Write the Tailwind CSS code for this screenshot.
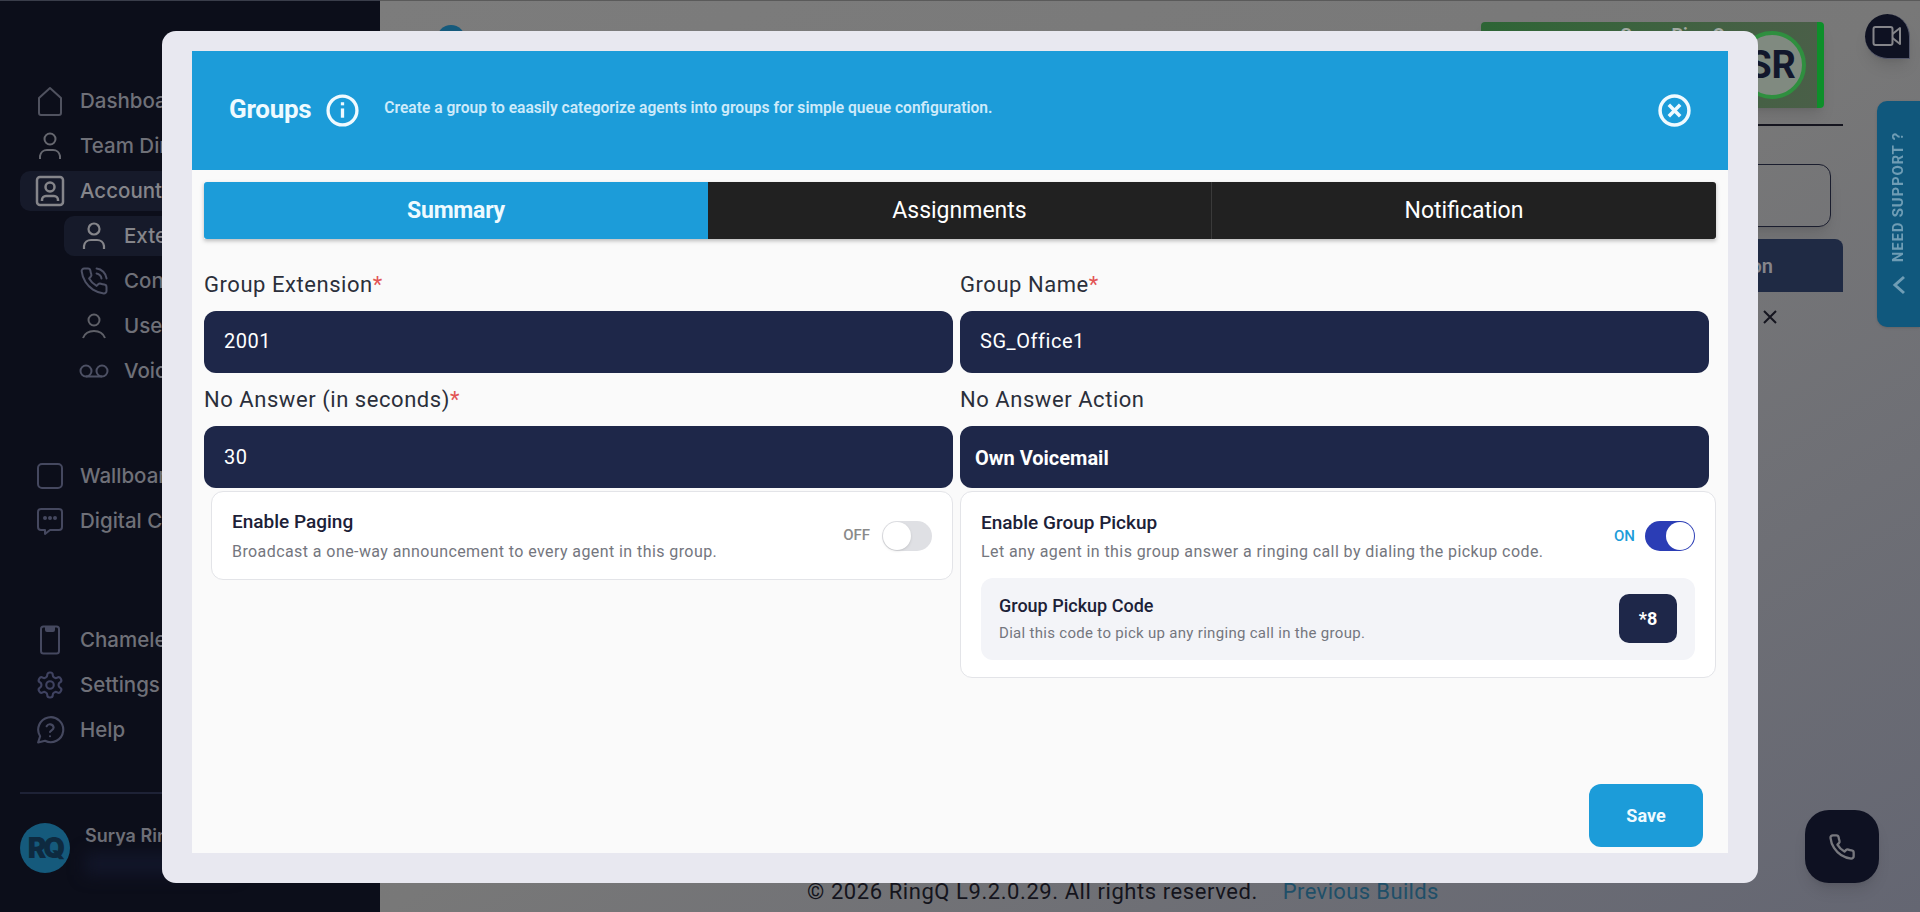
<!DOCTYPE html>
<html lang="en">
<head>
    <meta charset="UTF-8">
    <meta name="viewport" content="width=device-width, initial-scale=1.0">
    <title>RingQ Groups</title>
    <script src="https://cdn.jsdelivr.net/npm/@tailwindcss/browser@4"></script>
</head>
<body class="h-[912px] overflow-hidden font-['Roboto',sans-serif]">
    <div class="relative flex h-[912px] w-[1920px] overflow-hidden">

        <!-- Sidebar -->
        <aside class="flex h-full w-[380px] shrink-0 flex-col border-t border-[#3a3d4a] bg-[#0c0e1a] px-[20px] pt-[77.5px] font-['Inter',sans-serif] text-[20.5px] font-medium whitespace-nowrap text-[#6f7078]">
            <div class="flex h-[45px] items-center pl-[15px]">
                <svg class="mr-[15px] h-[32px] w-[30px] shrink-0" viewBox="0 0 30 32" fill="none" stroke="#50525f" stroke-width="2"><path d="M4 13 15 3l11 10v15a2 2 0 0 1-2 2H6a2 2 0 0 1-2-2z" stroke-linejoin="round"/></svg>
                Dashboard
            </div>
            <div class="flex h-[45px] items-center pl-[15px]">
                <svg class="mr-[15px] h-[28px] w-[30px] shrink-0" viewBox="0 0 30 28" fill="none" stroke="#66676f" stroke-width="2"><circle cx="15" cy="7" r="5.5"/><path d="M5 27v-3a7 7 0 0 1 7-6h6a7 7 0 0 1 7 6v3"/></svg>
                Team Directory
            </div>
            <div class="flex h-[45px] items-center">
                <div class="flex h-[40px] w-full items-center rounded-[10px] bg-[#161a2a] pl-[15px] text-[#85858a]">
                    <svg class="mr-[15px] h-[32px] w-[30px] shrink-0" viewBox="0 0 30 32" fill="none" stroke="#85858a" stroke-width="2.5"><rect x="2" y="2" width="26" height="28" rx="3"/><circle cx="15" cy="12" r="4.5"/><path d="M7 26v-1a4 4 0 0 1 4-4h8a4 4 0 0 1 4 4v1"/></svg>
                    Accounts
                </div>
            </div>
            <div class="flex h-[45px] items-center pl-[44px]">
                <div class="flex h-[40px] w-full items-center rounded-[10px] bg-[#161a2a] pl-[15px] text-[#85858a]">
                    <svg class="mr-[15px] h-[28px] w-[30px] shrink-0" viewBox="0 0 30 28" fill="none" stroke="#85858a" stroke-width="2.2"><circle cx="15" cy="7" r="5.5"/><path d="M5 27v-3a7 7 0 0 1 7-6h6a7 7 0 0 1 7 6v3"/></svg>
                    Extensions
                </div>
            </div>
            <div class="flex h-[45px] items-center pl-[59px]">
                <svg class="mr-[15px] h-[30px] w-[30px] shrink-0" viewBox="0 0 24 24" fill="none" stroke="#4d5064" stroke-width="1.6" stroke-linecap="round" stroke-linejoin="round"><path d="M14.05 2a9 9 0 0 1 8 7.94"/><path d="M14.05 6A5 5 0 0 1 18 10"/><path d="M22 16.92v3a2 2 0 0 1-2.18 2 19.79 19.79 0 0 1-8.63-3.07 19.5 19.5 0 0 1-6-6 19.79 19.79 0 0 1-3.07-8.67A2 2 0 0 1 4.11 2h3a2 2 0 0 1 2 1.72 12.84 12.84 0 0 0 .7 2.81 2 2 0 0 1-.45 2.11L8.09 9.91a16 16 0 0 0 6 6l1.27-1.27a2 2 0 0 1 2.11-.45 12.84 12.84 0 0 0 2.81.7A2 2 0 0 1 22 16.92z"/></svg>
                Contacts
            </div>
            <div class="flex h-[45px] items-center pl-[59px]">
                <svg class="mr-[15px] h-[26px] w-[30px] shrink-0" viewBox="0 0 30 26" fill="none" stroke="#5f6068" stroke-width="2"><circle cx="15" cy="7" r="5.5"/><path d="M4 25c2-5 6-7 11-7s9 2 11 7"/></svg>
                Users
            </div>
            <div class="flex h-[45px] items-center pl-[59px]">
                <svg class="mr-[15px] h-[18px] w-[30px] shrink-0" viewBox="0 0 30 18" fill="none" stroke="#4d5064" stroke-width="2"><circle cx="7" cy="9" r="5.5"/><circle cx="23" cy="9" r="5.5"/><path d="M7 14.5h16"/></svg>
                Voicemail
            </div>

            <div class="mt-[60px] flex h-[45px] items-center pl-[15px]">
                <svg class="mr-[15px] h-[28px] w-[30px] shrink-0" viewBox="0 0 30 28" fill="none" stroke="#45485f" stroke-width="2"><rect x="3" y="2" width="24" height="24" rx="4"/></svg>
                Wallboard
            </div>
            <div class="flex h-[45px] items-center pl-[15px]">
                <svg class="mr-[15px] h-[30px] w-[30px] shrink-0" viewBox="0 0 30 30" fill="none" stroke="#45485f" stroke-width="2"><path d="M6 3h18a3 3 0 0 1 3 3v15a3 3 0 0 1-3 3H15l-5 4v-4H6a3 3 0 0 1-3-3V6a3 3 0 0 1 3-3z" stroke-linejoin="round"/><circle cx="10" cy="12" r="1" fill="#45485f"/><circle cx="15" cy="12" r="1" fill="#45485f"/><circle cx="20" cy="12" r="1" fill="#45485f"/></svg>
                Digital Channels
            </div>

            <div class="mt-[74px] flex h-[45px] items-center pl-[15px]">
                <svg class="mr-[15px] h-[30px] w-[30px] shrink-0" viewBox="0 0 30 30" fill="none" stroke="#45485f" stroke-width="2"><rect x="6" y="1.5" width="18" height="27" rx="2.5"/><path d="M11 3h8v2a1 1 0 0 1-1 1h-6a1 1 0 0 1-1-1z" fill="#45485f"/></svg>
                Chameleon
            </div>
            <div class="flex h-[45px] items-center pl-[15px]">
                <svg class="mr-[15px] h-[30px] w-[30px] shrink-0" viewBox="0 0 24 24" fill="none" stroke="#3f4260" stroke-width="1.7" stroke-linecap="round" stroke-linejoin="round"><path d="M12.22 2h-.44a2 2 0 0 0-2 2v.18a2 2 0 0 1-1 1.73l-.43.25a2 2 0 0 1-2 0l-.15-.08a2 2 0 0 0-2.73.73l-.22.38a2 2 0 0 0 .73 2.73l.15.1a2 2 0 0 1 1 1.72v.51a2 2 0 0 1-1 1.74l-.15.09a2 2 0 0 0-.73 2.73l.22.38a2 2 0 0 0 2.73.73l.15-.08a2 2 0 0 1 2 0l.43.25a2 2 0 0 1 1 1.73V20a2 2 0 0 0 2 2h.44a2 2 0 0 0 2-2v-.18a2 2 0 0 1 1-1.73l.43-.25a2 2 0 0 1 2 0l.15.08a2 2 0 0 0 2.73-.73l.22-.39a2 2 0 0 0-.73-2.73l-.15-.08a2 2 0 0 1-1-1.74v-.5a2 2 0 0 1 1-1.74l.15-.09a2 2 0 0 0 .73-2.73l-.22-.38a2 2 0 0 0-2.73-.73l-.15.08a2 2 0 0 1-2 0l-.43-.25a2 2 0 0 1-1-1.73V4a2 2 0 0 0-2-2z"/><circle cx="12" cy="12" r="3"/></svg>
                Settings
            </div>
            <div class="flex h-[45px] items-center pl-[15px]">
                <svg class="mr-[15px] h-[30px] w-[30px] shrink-0" viewBox="0 0 24 24" fill="none" stroke="#45485f" stroke-width="1.7" stroke-linecap="round" stroke-linejoin="round"><path d="M2.5 22l1.6-5A10 10 0 1 1 8 20.6z"/><path d="M9.3 9a3 3 0 0 1 5.6 1c0 2-2.9 2.6-2.9 3.6"/><path d="M12 17h.01"/></svg>
                Help
            </div>

            <div class="mt-[39px] h-[2px] w-[300px] bg-[#1e2236]"></div>
            <div class="mt-[29px] flex items-start">
                <div class="flex h-[50px] w-[50px] shrink-0 items-center justify-center rounded-full bg-[#155a7c] text-[28px] font-black tracking-[-3px] text-[#0e2a40]">RQ</div>
                <div class="ml-[15px]">
                    <div class="mt-[-1px] text-[18px] font-semibold text-[#6f7078]">Surya RingQ</div>
                    <div class="mt-[4px] h-[22px] w-[150px] bg-[#12162a] blur-sm"></div>
                </div>
            </div>
        </aside>

        <!-- Dimmed page behind the dialog -->
        <main class="flex h-full min-w-0 flex-1 flex-col border-t border-[#5a5a5a] bg-linear-to-br from-[#7c7c7c] via-[#787878] to-[#646672]">
            <div class="flex items-start justify-between pt-[21px] pr-[96px]">
                <div class="mt-[3px] ml-[57px] h-[28px] w-[28px] rounded-full bg-[#155a7c]"></div>
                <div class="flex h-[86px] w-[343px] items-center justify-end rounded-[4px] border-r-[7px] border-[#0d8f2a] bg-linear-to-r from-[#2d6535] to-[#4a5f48] pr-[11px] shadow-lg">
                    <span class="mr-[13px] self-start text-[18px] leading-[26px] font-bold whitespace-nowrap text-[#a3aaa3]">Surya Ring Q</span>
                    <div class="flex h-[68px] w-[68px] items-center justify-center rounded-full border-[4px] border-[#2f8f3f] bg-[#808a80] text-[38px] font-bold text-[#12172c]">SR</div>
                </div>
            </div>
            <div class="mt-[16px] mr-[77px] ml-[700px] h-[2px] bg-[#15151f]"></div>
            <div class="mt-[38px] mr-[89px] ml-[700px] h-[63px] rounded-[12px] border border-[#1a1d2e] shadow-lg"></div>
            <div class="mt-[12px] mr-[77px] ml-[700px] flex h-[53px] items-center justify-end rounded-t-[8px] bg-[#1f2a44] pr-[70px] text-[20px] font-semibold text-[#85858a]">Add Extension</div>
            <div class="mt-[17px] mr-[142px] flex justify-end">
                <svg class="h-[16px] w-[16px]" viewBox="0 0 16 16" fill="none" stroke="#15151f" stroke-width="2"><path d="M2 2l12 12M14 2 2 14"/></svg>
            </div>
            <div class="mt-auto mb-[7px] ml-[427px] flex text-[22px] leading-[26px] tracking-[0.57px] whitespace-nowrap text-[#14141c]">
                <span>© 2026 RingQ L9.2.0.29. All rights reserved.</span>
                <span class="ml-[25px] tracking-[0.37px] text-[#1f4f68]">Previous Builds</span>
            </div>
        </main>

        <!-- Need support tab -->
        <div class="absolute top-[101px] right-0 flex h-[226px] w-[43px] flex-col items-center rounded-l-[10px] bg-[#10587d] pt-[31px] shadow">
            <span class="rotate-180 text-[15px] font-bold tracking-[0.8px] whitespace-nowrap text-[#6f9db5] [writing-mode:vertical-rl]">NEED SUPPORT ?</span>
            <svg class="mt-[13px] h-[20px] w-[14px]" viewBox="0 0 14 20" fill="none" stroke="#6f9db5" stroke-width="3"><path d="M12 2 3 10l9 8"/></svg>
        </div>

        <!-- Video bubble -->
        <div class="absolute top-[14px] left-[1865px] flex h-[45px] w-[45px] items-center justify-center rounded-t-full rounded-bl-full rounded-br-[2px] border-r border-b border-[#55586c] bg-[#0e1122] shadow-lg">
            <svg class="h-[22px] w-[30px]" viewBox="0 0 30 22" fill="none" stroke="#85858a" stroke-width="2" stroke-linejoin="round"><rect x="1.5" y="2" width="19" height="18" rx="2"/><path d="M20.5 9 28 3v16l-7.5-6"/></svg>
        </div>

        <!-- Dial button -->
        <div class="absolute top-[810px] left-[1805px] flex h-[73px] w-[74px] items-center justify-center rounded-[24px] bg-[#0e1122] shadow-lg">
            <svg class="h-[28px] w-[28px]" viewBox="0 0 24 24" fill="none" stroke="#77787e" stroke-width="2" stroke-linecap="round" stroke-linejoin="round"><path d="M22 16.92v3a2 2 0 0 1-2.18 2 19.79 19.79 0 0 1-8.63-3.07 19.5 19.5 0 0 1-6-6 19.79 19.79 0 0 1-3.07-8.67A2 2 0 0 1 4.11 2h3a2 2 0 0 1 2 1.72 12.84 12.84 0 0 0 .7 2.81 2 2 0 0 1-.45 2.11L8.09 9.91a16 16 0 0 0 6 6l1.27-1.27a2 2 0 0 1 2.11-.45 12.84 12.84 0 0 0 2.81.7A2 2 0 0 1 22 16.92z"/></svg>
        </div>

        <!-- Dialog -->
        <div class="absolute top-[31px] left-[162px] h-[852px] w-[1596px] rounded-[14px] bg-[#e8e8f0] px-[30px] pt-[20px] pb-[30px]">
            <div class="flex h-full flex-col bg-[#fafafa]">
                <div class="flex h-[119px] shrink-0 items-center justify-between bg-[#1c9cd9] pr-[37px] pl-[37px] text-white">
                    <div class="flex items-center">
                        <span class="mt-[-2px] text-[26px] font-bold tracking-[-0.3px] text-[#eefaff]">Groups</span>
                        <svg class="ml-[15px] h-[33px] w-[33px]" viewBox="0 0 32 32" fill="none" stroke="#f0faff" stroke-width="3.2"><circle cx="16" cy="16" r="14"/><path d="M16 14v9"/><path d="M16 8v3"/></svg>
                        <span class="mt-[-3px] ml-[25px] text-[15.6px] font-semibold text-[#cdeafa]">Create a group to eaasily categorize agents into groups for simple queue configuration.</span>
                    </div>
                    <svg class="h-[33px] w-[33px]" viewBox="0 0 32 32" fill="none" stroke="#f0faff" stroke-width="3.4"><circle cx="16" cy="16" r="14"/><path d="M10.5 10.5l11 11M21.5 10.5l-11 11"/></svg>
                </div>

                <div class="flex min-h-0 flex-1 flex-col px-[12px] pt-[12px]">
                    <!-- Tabs -->
                    <div class="grid h-[57px] shrink-0 grid-cols-3 text-[23px] shadow-[0_2px_4px_rgba(0,0,0,0.25)]">
                        <div class="flex items-center justify-center rounded-l-[3px] bg-[#1c9cd9] pt-[2px] font-bold tracking-[-0.2px] text-[#eefaff]">Summary</div>
                        <div class="flex items-center justify-center border-r border-[#3a3a3a] bg-[#212121] pt-[2px] text-white">Assignments</div>
                        <div class="flex items-center justify-center rounded-r-[3px] bg-[#212121] pt-[2px] text-white">Notification</div>
                    </div>

                    <!-- Fields -->
                    <div class="mt-[19px] grid shrink-0 grid-cols-2 text-[22px] tracking-[0.55px] text-[#2b2f3a]">
                        <div class="pr-[7px]">
                            <div class="flex h-[53px] items-center">Group Extension<span class="text-[#e25555]">*</span></div>
                            <div class="flex h-[62px] items-center rounded-[12px] bg-[#1e2749] pb-[2px] pl-[20px] text-[20px] text-white">2001</div>
                        </div>
                        <div class="pr-[7px]">
                            <div class="flex h-[53px] items-center">Group Name<span class="text-[#e25555]">*</span></div>
                            <div class="flex h-[62px] items-center rounded-[12px] bg-[#1e2749] pb-[2px] pl-[20px] text-[20px] text-white">SG_Office1</div>
                        </div>
                        <div class="pr-[7px]">
                            <div class="flex h-[53px] items-center">No Answer (in seconds)<span class="text-[#e25555]">*</span></div>
                            <div class="flex h-[62px] items-center rounded-[12px] bg-[#1e2749] pl-[20px] text-[20px] text-white">30</div>
                        </div>
                        <div class="pr-[7px]">
                            <div class="flex h-[53px] items-center">No Answer Action</div>
                            <div class="flex h-[62px] items-center rounded-[12px] bg-[#1e2749] pt-[1px] pl-[15px] text-[20px] font-bold tracking-normal text-white">Own Voicemail</div>
                        </div>
                    </div>

                    <!-- Toggles -->
                    <div class="mt-[3px] grid shrink-0 grid-cols-2 items-start">
                        <div class="ml-[7px] mr-[7px] flex h-[89px] items-center justify-between rounded-[12px] border border-[#e3e4e8] bg-white pr-[20px] pl-[20px]">
                            <div>
                                <div class="mt-[1px] text-[19px] font-medium text-[#1c2137]">Enable Paging</div>
                                <div class="mt-[3px] text-[16px] tracking-[0.42px] text-[#74767e]">Broadcast a one-way announcement to every agent in this group.</div>
                            </div>
                            <div class="flex items-center">
                                <span class="mr-[12px] text-[15px] font-medium text-[#8a8a8a]">OFF</span>
                                <div class="flex h-[30px] w-[50px] items-center rounded-full bg-[#dfe0e4] pl-[1px]">
                                    <div class="h-[28px] w-[28px] rounded-full bg-white shadow"></div>
                                </div>
                            </div>
                        </div>
                        <div class="rounded-[12px] border border-[#e3e4e8] bg-white px-[20px] pt-[16px] pb-[17px]">
                            <div class="flex items-center justify-between">
                                <div>
                                    <div class="mt-[1px] text-[19px] font-medium text-[#1c2137]">Enable Group Pickup</div>
                                    <div class="mt-[2px] text-[16px] tracking-[0.42px] text-[#74767e]">Let any agent in this group answer a ringing call by dialing the pickup code.</div>
                                </div>
                                <div class="flex items-center">
                                    <span class="mr-[10px] text-[15px] font-medium text-[#1c9cd9]">ON</span>
                                    <div class="flex h-[30px] w-[50px] items-center justify-end rounded-full bg-[#2b3db5] pr-[1px]">
                                        <div class="h-[28px] w-[28px] rounded-full bg-white"></div>
                                    </div>
                                </div>
                            </div>
                            <div class="mt-[14px] flex h-[82px] items-center justify-between rounded-[12px] bg-[#f3f4f8] pr-[18px] pl-[18px]">
                                <div>
                                    <div class="text-[18px] font-medium text-[#1c2137]">Group Pickup Code</div>
                                    <div class="mt-[3px] text-[15px] tracking-[0.3px] text-[#74767e]">Dial this code to pick up any ringing call in the group.</div>
                                </div>
                                <div class="flex h-[49px] w-[58px] items-center justify-center rounded-[10px] bg-[#1e2749] text-[18px] font-bold text-white">*8</div>
                            </div>
                        </div>
                    </div>

                    <div class="mt-auto mb-[6px] flex shrink-0 justify-end pr-[13px]">
                        <button class="h-[63px] w-[114px] rounded-[12px] bg-[#1c9cd9] text-[18px] font-bold text-[#eefaff]">Save</button>
                    </div>
                </div>
            </div>
        </div>
    </div>
</body>
</html>
